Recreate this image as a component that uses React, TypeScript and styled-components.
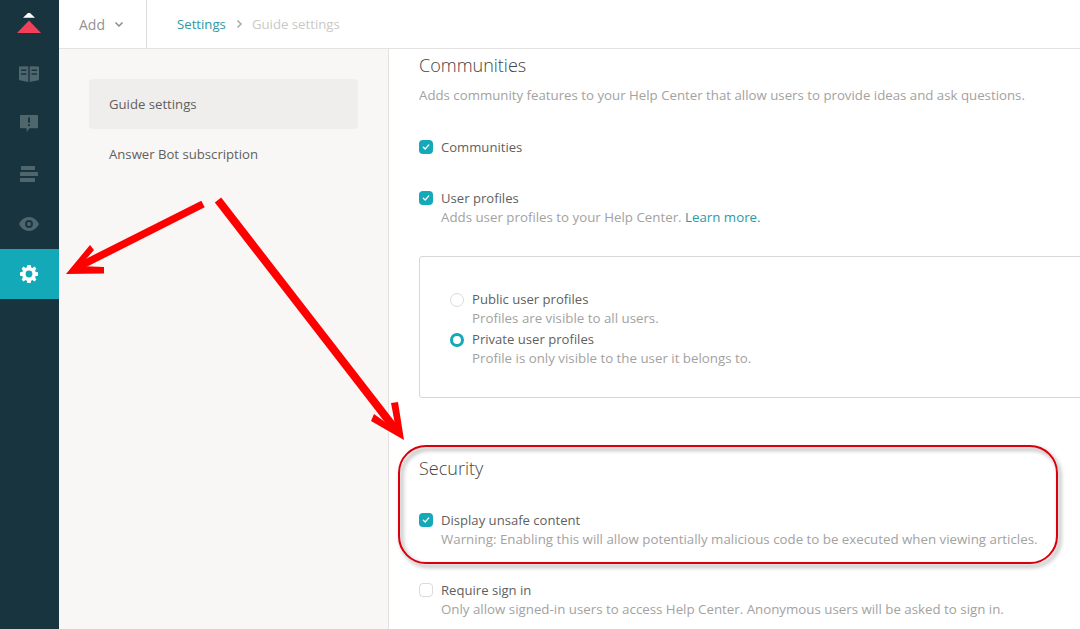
import React from "react";
import styled, { createGlobalStyle } from "styled-components";

const Global = createGlobalStyle`
  html, body { margin: 0; padding: 0; background: #fff; }
  body { font-family: "Open Sans", "Liberation Sans", sans-serif; font-size: 13.25px; color: #555; }
`;

const Page = styled.div`
  position: relative;
  display: flex;
  width: 1080px;
  height: 629px;
  overflow: hidden;
`;

const Sidebar = styled.nav`
  flex: 0 0 59px;
  display: flex;
  flex-direction: column;
  background: #17343f;
`;

const LogoCell = styled.div`
  height: 49px;
  padding-right: 1px;
  display: flex;
  justify-content: center;
  align-items: center;
`;

const NavItem = styled.div<{ $active?: boolean }>`
  height: 50px;
  padding-right: 1px;
  display: flex;
  align-items: center;
  justify-content: center;
  background: ${(p) => (p.$active ? "#14a9b8" : "transparent")};
  color: ${(p) => (p.$active ? "#ffffff" : "#4e666c")};
`;

const Shell = styled.div`
  flex: 1;
  min-width: 0;
  display: flex;
  flex-direction: column;
`;

const TopBar = styled.header`
  flex: 0 0 48px;
  display: flex;
  align-items: stretch;
  border-bottom: 1px solid #e3e2e0;
  background: #fff;
`;

const AddButton = styled.div`
  width: 88px;
  box-sizing: border-box;
  padding-left: 20px;
  display: flex;
  align-items: center;
  gap: 9px;
  border-right: 1px solid #dcdbd9;
  font-size: 14px;
  color: #939391;
`;

const Crumbs = styled.div`
  display: flex;
  align-items: center;
  padding-left: 30px;
  gap: 8px;
  font-size: 13.2px;
`;

const CrumbLink = styled.span`
  color: #2b9aa5;
`;

const CrumbCurrent = styled.span`
  color: #c9c9c7;
`;

const Body = styled.div`
  flex: 1;
  min-height: 0;
  display: flex;
`;

const SideMenu = styled.aside`
  flex: 0 0 330px;
  box-sizing: border-box;
  padding: 30px 30px 0;
  background: #f8f7f5;
  border-right: 1px solid #e3e2e0;
`;

const MenuItem = styled.div<{ $active?: boolean }>`
  height: 50px;
  display: flex;
  align-items: center;
  padding-left: 20px;
  border-radius: 4px;
  font-size: 13.15px;
  color: #5f5f5f;
  background: ${(p) => (p.$active ? "#efeeec" : "transparent")};
`;

const Main = styled.main`
  flex: 1;
  min-width: 0;
  padding: 4px 0 0 30px;
`;

const Heading = styled.h2<{ $top?: number }>`
  margin: ${(p) => p.$top ?? 0}px 0 0;
  font-size: 18px;
  font-weight: 300;
  line-height: 24px;
  color: #444;
`;

const Intro = styled.p`
  margin: 8px 0 0;
  font-size: 13.25px;
  line-height: 20px;
  color: #a3a29f;
`;

const CheckRow = styled.div<{ $top: number }>`
  display: grid;
  grid-template-columns: 14px 1fr;
  column-gap: 8px;
  margin-top: ${(p) => p.$top}px;
`;

const CheckBox = styled.span<{ $on?: boolean }>`
  box-sizing: border-box;
  width: 14px;
  height: 14px;
  margin-top: 2px;
  border-radius: 4px;
  display: flex;
  align-items: center;
  justify-content: center;
  background: ${(p) => (p.$on ? "#14a9b8" : "#fff")};
  border: ${(p) => (p.$on ? "none" : "1px solid #dcdbd9")};
`;

const Label = styled.div`
  font-size: 13.1px;
  line-height: 19px;
  color: #5f5f5f;
`;

const Hint = styled.div`
  font-size: 13.3px;
  line-height: 19px;
  color: #a3a29f;
  white-space: nowrap;
`;

const HintLink = styled.span`
  color: #2b9aa5;
`;

const OptionBox = styled.div`
  box-sizing: border-box;
  width: 800px;
  height: 142px;
  margin-top: 29px;
  padding: 33px 0 0 30px;
  border: 1px solid #d8d7d5;
  border-radius: 3px;
`;

const RadioRow = styled.div`
  display: grid;
  grid-template-columns: 14px 1fr;
  column-gap: 8px;
  margin-bottom: 2px;
`;

const Radio = styled.span<{ $on?: boolean }>`
  box-sizing: border-box;
  width: 14px;
  height: 14px;
  margin-top: 3px;
  border-radius: 50%;
  background: #fff;
  border: ${(p) => (p.$on ? "3px solid #14a9b8" : "1px solid #dcdbd9")};
`;

const Overlay = styled.svg`
  position: absolute;
  left: 0;
  top: 0;
  pointer-events: none;
`;

const Check = () => (
  <svg width="8" height="8" viewBox="0 0 8 8" aria-hidden="true">
    <path d="M1.300 4.200 3.200 6 6.800 1.900" fill="none" stroke="#fff" strokeWidth="1.300" strokeLinecap="round" strokeLinejoin="round" />
  </svg>
);

const Logo = () => (
  <svg width="26" height="24" viewBox="0 0 26 24" aria-hidden="true">
    <path d="M13 -1 19 4.800H7Z" fill="#fff" />
    <path d="M13 7.500 25 20H1Z" fill="#f2405a" />
  </svg>
);

const BookIcon = () => (
  <svg width="22" height="18" viewBox="0 0 22 18" fill="currentColor" aria-hidden="true">
    <path fillRule="evenodd" d="M1 1.500 9.800 1.200C10 1.200 10.300 1.400 10.300 1.800V17L1.600 15.300C1.200 15.200 1 15 1 14.600ZM3 4.500V6H8.400V4.500ZM3 8.200V9.700H8.400V8.200Z" />
    <path fillRule="evenodd" d="M21 1.500 12.200 1.200C12 1.200 11.700 1.400 11.700 1.800V17L20.400 15.300C20.800 15.200 21 15 21 14.600ZM13.600 4.500V6H19V4.500ZM13.600 8.200V9.700H19V8.200Z" />
  </svg>
);

const AlertIcon = () => (
  <svg width="18" height="18" viewBox="0 0 18 18" fill="currentColor" aria-hidden="true">
    <path fillRule="evenodd" d="M1 0H17C17.600 0 18 .4 18 1V12.200C18 12.800 17.600 13.200 17 13.200H9.600L6.600 17V13.200H1C.4 13.200 0 12.800 0 12.200V1C0 .4.4 0 1 0ZM8 2.600V7.800H10V2.600ZM8 9.200V11H10V9.200Z" />
  </svg>
);

const LinesIcon = () => (
  <svg width="18" height="16" viewBox="0 0 18 16" fill="currentColor" aria-hidden="true">
    <rect x="1" y="0" width="14" height="4" rx=".6" />
    <rect x="0" y="6" width="18" height="4" rx=".6" />
    <rect x="0" y="12" width="15" height="4" rx=".6" />
  </svg>
);

const EyeIcon = () => (
  <svg width="20" height="14" viewBox="0 0 20 14" fill="currentColor" aria-hidden="true">
    <path fillRule="evenodd" d="M10 0C14.400 0 18 3 20 7 18 11 14.400 14 10 14 5.600 14 2 11 0 7 2 3 5.600 0 10 0ZM10 3.100A3.900 3.900 0 1 0 10 10.900 3.900 3.900 0 0 0 10 3.100ZM10 5A2 2 0 1 1 10 9 2 2 0 0 1 10 5Z" />
  </svg>
);

const GearIcon = () => (
  <svg width="18" height="18" viewBox="0 0 18 18" fill="currentColor" aria-hidden="true">
    <path fillRule="evenodd" d="M7.300 0H10.700L11.100 2.300 12.500 2.900 14.500 1.600 16.400 3.500 15.100 5.500 15.700 6.900 18 7.300V10.700L15.700 11.100 15.100 12.500 16.400 14.500 14.500 16.400 12.500 15.100 11.100 15.700 10.700 18H7.300L6.900 15.700 5.500 15.100 3.500 16.400 1.600 14.500 2.900 12.500 2.300 11.100 0 10.700V7.300L2.300 6.900 2.900 5.500 1.600 3.500 3.500 1.600 5.500 2.900 6.900 2.300ZM9 5.600A3.400 3.400 0 1 0 9 12.400 3.400 3.400 0 0 0 9 5.600Z" />
  </svg>
);

const Chevron = ({ right }: { right?: boolean }) => (
  <svg width="10" height="10" viewBox="0 0 10 10" aria-hidden="true">
    <path
      d={right ? "M3.500 1.500 7 5 3.500 8.500" : "M1.500 3.500 5 7 8.500 3.500"}
      fill="none"
      stroke={right ? "#a9a9a7" : "#8a8a88"}
      strokeWidth="1.500"
    />
  </svg>
);

export default function App() {
  return (
    <Page>
      <Global />
      <Sidebar>
        <LogoCell>
          <Logo />
        </LogoCell>
        <NavItem><BookIcon /></NavItem>
        <NavItem><AlertIcon /></NavItem>
        <NavItem><LinesIcon /></NavItem>
        <NavItem><EyeIcon /></NavItem>
        <NavItem $active><GearIcon /></NavItem>
      </Sidebar>
      <Shell>
        <TopBar>
          <AddButton>
            Add <Chevron />
          </AddButton>
          <Crumbs>
            <CrumbLink>Settings</CrumbLink>
            <Chevron right />
            <CrumbCurrent>Guide settings</CrumbCurrent>
          </Crumbs>
        </TopBar>
        <Body>
          <SideMenu>
            <MenuItem $active>Guide settings</MenuItem>
            <MenuItem>Answer Bot subscription</MenuItem>
          </SideMenu>
          <Main>
            <Heading>Communities</Heading>
            <Intro>Adds community features to your Help Center that allow users to provide ideas and ask questions.</Intro>
            <CheckRow $top={33}>
              <CheckBox $on><Check /></CheckBox>
              <Label>Communities</Label>
            </CheckRow>
            <CheckRow $top={32}>
              <CheckBox $on><Check /></CheckBox>
              <div>
                <Label>User profiles</Label>
                <Hint>Adds user profiles to your Help Center. <HintLink>Learn more.</HintLink></Hint>
              </div>
            </CheckRow>
            <OptionBox>
              <RadioRow>
                <Radio />
                <div>
                  <Label>Public user profiles</Label>
                  <Hint>Profiles are visible to all users.</Hint>
                </div>
              </RadioRow>
              <RadioRow>
                <Radio $on />
                <div>
                  <Label>Private user profiles</Label>
                  <Hint>Profile is only visible to the user it belongs to.</Hint>
                </div>
              </RadioRow>
            </OptionBox>
            <Heading $top={58}>Security</Heading>
            <CheckRow $top={31}>
              <CheckBox $on><Check /></CheckBox>
              <div>
                <Label>Display unsafe content</Label>
                <Hint>Warning: Enabling this will allow potentially malicious code to be executed when viewing articles.</Hint>
              </div>
            </CheckRow>
            <CheckRow $top={32}>
              <CheckBox />
              <div>
                <Label>Require sign in</Label>
                <Hint>Only allow signed-in users to access Help Center. Anonymous users will be asked to sign in.</Hint>
              </div>
            </CheckRow>
          </Main>
        </Body>
      </Shell>
      <Overlay width="1080" height="629" viewBox="0 0 1080 629" aria-hidden="true">
        <defs>
          <filter id="soft" x="-5%" y="-15%" width="110%" height="130%">
            <feDropShadow dx="2.500" dy="3" stdDeviation="2" floodColor="#000" floodOpacity="0.45" />
          </filter>
        </defs>
        <rect x="399" y="446" width="658" height="117" rx="27" fill="none" stroke="#d9000f" strokeWidth="2" filter="url(#soft)" />
        <g fill="none" stroke="#ff0000">
          <path d="M203 204 80 266" strokeWidth="7.500" />
          <path d="M218 200 396 430" strokeWidth="8" />
        </g>
        <path d="M66 274 90 245 94 250 80 266 104 267V273.500Z" fill="#ff0000" />
        <path d="M404 440 371 421 374 414 396 430 391 403 398 402Z" fill="#ff0000" />
      </Overlay>
    </Page>
  );
}
